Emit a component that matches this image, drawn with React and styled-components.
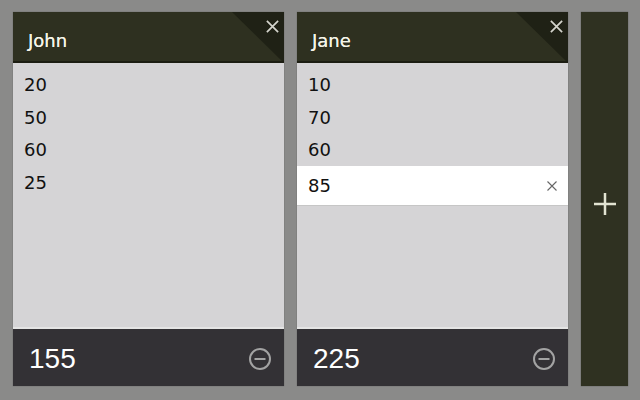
import React from 'react';
import styled, { createGlobalStyle } from 'styled-components';

const GlobalStyle = createGlobalStyle`
  html, body {
    margin: 0;
    padding: 0;
    background: #8a8a89;
  }
  * { box-sizing: border-box; }
`;

const Board = styled.div`
  display: flex;
  gap: 13px;
  padding: 12px 12px 14px 13px;
  width: 640px;
  height: 400px;
`;

const Column = styled.div`
  width: 271px;
  display: flex;
  flex-direction: column;
  background: #d5d4d6;
  box-shadow: 0 0 1px rgba(0, 0, 0, 0.35);
`;

const Header = styled.div`
  position: relative;
  height: 51px;
  display: flex;
  align-items: center;
  padding: 7px 15px 0;
  background: #2e3020;
  border-bottom: 2px solid #1c1d12;
  overflow: hidden;
  font-family: "DejaVu Sans", Verdana, sans-serif;
  font-size: 18px;
  color: #f4f4e8;
  text-shadow: 0 0 0.6px #f4f4e8;

  &::before {
    content: '';
    position: absolute;
    top: 0;
    right: 0;
    border-top: 51px solid #1f2115;
    border-left: 52px solid transparent;
  }
`;

const Name = styled.span`
  position: relative;
`;

const CloseCorner = styled.button`
  position: absolute;
  top: 6px;
  right: 4px;
  width: 16px;
  height: 16px;
  padding: 0;
  border: 0;
  background: none;
  display: flex;
  align-items: center;
  justify-content: center;
  cursor: pointer;
`;

const Items = styled.ul`
  list-style: none;
  margin: 0;
  padding: 5px 0 0;
  flex: 1;
`;

const Item = styled.li`
  height: ${(p) => (p.$active ? '40px' : '32.5px')};
  display: flex;
  align-items: center;
  justify-content: space-between;
  padding: 1px 10px 0 11px;
  background: ${(p) => (p.$active ? '#ffffff' : 'transparent')};
  border-bottom: ${(p) => (p.$active ? '1px solid #c6c6c6' : '0')};
  font-family: "DejaVu Sans", Verdana, sans-serif;
  font-size: 18px;
  color: #111;
`;

const Footer = styled.div`
  height: 59px;
  display: flex;
  align-items: center;
  justify-content: space-between;
  padding: 2px 12px 0 16px;
  background: #333135;
  border-top: 2px solid #e4e4e4;
  font-family: "Liberation Sans", Arial, sans-serif;
  font-size: 28px;
  color: #fff;
`;

const AddColumn = styled.button`
  width: 47px;
  border: 0;
  padding: 10px 0 0;
  background: #2f3121;
  display: flex;
  align-items: center;
  justify-content: center;
  box-shadow: 0 0 1px rgba(0, 0, 0, 0.5);
  cursor: pointer;
`;

const Cross = ({ size, color, width }) => (
  <svg width={size} height={size} viewBox="0 0 16 16">
    <path d="M2 2L14 14M14 2L2 14" stroke={color} strokeWidth={width} fill="none" />
  </svg>
);

const MinusCircle = () => (
  <svg width="24" height="24" viewBox="0 0 24 24">
    <circle cx="12" cy="12" r="10" stroke="#a3a3a3" strokeWidth="2" fill="none" />
    <path d="M6.5 12H17.5" stroke="#a3a3a3" strokeWidth="2" />
  </svg>
);

const people = [
  { name: 'John', values: [20, 50, 60, 25], active: -1 },
  { name: 'Jane', values: [10, 70, 60, 85], active: 3 },
];

export default function App() {
  return (
    <>
      <GlobalStyle />
      <Board>
        {people.map((p) => (
          <Column key={p.name}>
            <Header>
              <Name>{p.name}</Name>
              <CloseCorner>
                <Cross size={15} color="#d4d4cc" width={1.8} />
              </CloseCorner>
            </Header>
            <Items>
              {p.values.map((v, i) => (
                <Item key={i} $active={i === p.active}>
                  {v}
                  {i === p.active && <Cross size={12} color="#666" width={1.5} />}
                </Item>
              ))}
            </Items>
            <Footer>
              {p.values.reduce((a, b) => a + b, 0)}
              <MinusCircle />
            </Footer>
          </Column>
        ))}
        <AddColumn>
          <svg width="24" height="24" viewBox="0 0 24 24">
            <path d="M12 1V23M1 12H23" stroke="#e2e4d2" strokeWidth="2.5" />
          </svg>
        </AddColumn>
      </Board>
    </>
  );
}
